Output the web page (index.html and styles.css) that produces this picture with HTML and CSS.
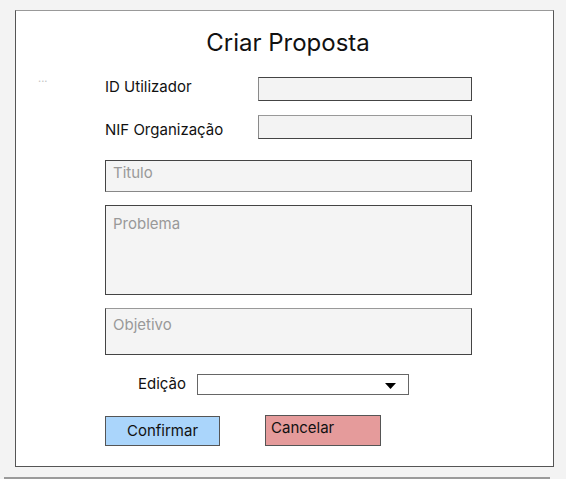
FILE: index.html
```html
<!DOCTYPE html>
<html lang="pt">
<head>
<meta charset="utf-8">
<title>Criar Proposta</title>
<link rel="stylesheet" href="styles.css">
</head>
<body>
<div class="panel">
  <h1 class="title">Criar Proposta</h1>
  <span class="dots">...</span>
  <div class="form">
    <div class="row row--first">
      <span class="label">ID Utilizador</span>
      <div class="input"></div>
    </div>
    <div class="row row--second">
      <span class="label">NIF Organização</span>
      <div class="input"></div>
    </div>
    <div class="field field--title">Titulo</div>
    <div class="field field--problem">Problema</div>
    <div class="field field--objective">Objetivo</div>
    <div class="edition">
      <span class="edition-label">Edição</span>
      <div class="select">
        <svg class="arrow" width="11" height="6" viewBox="0 0 11 6"><path d="M0 0H11L5.5 6Z" fill="#000"/></svg>
      </div>
    </div>
    <div class="actions">
      <button class="btn btn--confirm">Confirmar</button>
      <button class="btn btn--cancel">Cancelar</button>
    </div>
  </div>
</div>
<div class="baseline"></div>
</body>
</html>
```
FILE: styles.css
```css
* { box-sizing: border-box; }
html, body { margin: 0; padding: 0; }
body {
  background: #f3f3f3;
  font-family: Inter, "Liberation Sans", sans-serif;
  color: #111;
  width: 566px;
  height: 479px;
  overflow: hidden;
}
.panel {
  position: relative;
  margin: 10px 0 0 15px;
  width: 539px;
  height: 457px;
  background: #fff;
  border: 1px solid #555;
  border-top-color: #999;
}
.title {
  margin: 0;
  padding-top: 17px;
  padding-left: 7px;
  text-align: center;
  font-size: 24px;
  font-weight: 400;
  line-height: 29px;
  color: #111;
}
.dots {
  position: absolute;
  left: 22px;
  top: 60px;
  font-size: 11px;
  letter-spacing: 0;
  color: #c4c4c4;
}
.form {
  padding-left: 89px;
  padding-top: 20px;
  display: flex;
  flex-direction: column;
}
.row {
  display: flex;
  align-items: flex-start;
}
.row--second { margin-top: 14px; }
.label {
  width: 153px;
  font-size: 15px;
  line-height: 18px;
}
.row--first .label { padding-top: 1px; }
.row--second .label { padding-top: 6px; }
.input {
  width: 214px;
  height: 24px;
  background: #f3f3f3;
  border: 1px solid #444;
  border-left-color: #8a8a8a;
}
.row--second .input { border-top-color: #999; border-left-color: #8a8a8a; }
.field {
  width: 367px;
  background: #f4f4f4;
  border: 1px solid #444;
  font-size: 15px;
  line-height: 18px;
  color: #999;
  padding-left: 7px;
}
.field--title { margin-top: 21px; height: 32px; padding-top: 3px; border-bottom-color: #888; }
.field--problem { margin-top: 13px; height: 90px; padding-top: 9px; }
.field--objective { margin-top: 13px; height: 47px; padding-top: 7px; border-top-color: #999; }
.edition {
  margin-top: 19px;
  display: flex;
  align-items: center;
  padding-left: 33px;
}
.edition-label {
  font-size: 15px;
  line-height: 18px;
  width: 59px;
  padding-bottom: 2px;
}
.select {
  width: 212px;
  height: 21px;
  background: #fff;
  border: 1px solid #666;
  display: flex;
  align-items: center;
  justify-content: flex-end;
  padding-right: 12px;
}
.arrow { display: block; margin-top: 2px; }
.actions {
  margin-top: 20px;
  display: flex;
  align-items: flex-start;
  gap: 45px;
}
.btn {
  font-family: Inter, "Liberation Sans", sans-serif;
  font-size: 15px;
  color: #111;
  border: 1px solid #555;
  padding: 0;
  margin: 0;
  height: 30px;
}
.btn--confirm {
  width: 115px;
  margin-top: 1px;
  background: #aad5fb;
  text-align: center;
  line-height: 28px;
}
.btn--cancel {
  width: 116px;
  height: 31px;
  background: #e59b9b;
  text-align: left;
  padding-left: 5px;
  line-height: 20px;
  display: flex;
  align-items: flex-start;
  padding-top: 2px;
}
.baseline {
  margin: 10px 0 0 4px;
  width: 546px;
  height: 2px;
  background: #9b9b9b;
}
```
